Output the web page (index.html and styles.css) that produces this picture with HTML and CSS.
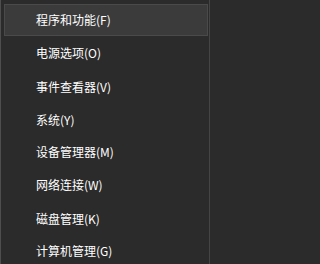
FILE: index.html
```html
<!DOCTYPE html>
<html lang="zh-CN">
<head>
<meta charset="utf-8">
<link rel="stylesheet" href="styles.css">
</head>
<body>
<ul class="menu">
  <li class="item active">程序和功能(F)</li>
  <li class="item">电源选项(O)</li>
  <li class="item">事件查看器(V)</li>
  <li class="item">系统(Y)</li>
  <li class="item">设备管理器(M)</li>
  <li class="item">网络连接(W)</li>
  <li class="item">磁盘管理(K)</li>
  <li class="item">计算机管理(G)</li>
</ul>
</body>
</html>
```
FILE: styles.css
```css
html, body {
  margin: 0;
  padding: 0;
  background: #2b2b2b;
  height: 264px;
  overflow: hidden;
}
.menu {
  box-sizing: border-box;
  list-style: none;
  margin: 0;
  padding: 4px 1px 0 3px;
  border-left: 1px solid #4e4e4e;
  border-right: 1px solid #454545;
  height: 264px;
  width: 210px;
  font-family: "Noto Sans CJK SC", "Noto Sans", sans-serif;
  font-size: 12px;
  color: #ffffff;
}
.item {
  box-sizing: border-box;
  width: 204px;
  height: 32px;
  margin-bottom: 1px;
  padding-left: 31px;
  border: 1px solid transparent;
  display: flex;
  align-items: center;
  line-height: 1;
}
.item:nth-child(3), .item:nth-child(4), .item:nth-child(7) {
  padding-top: 1px;
}
.item.active {
  background: #3b3b3b;
  border-color: #4a4a4a;
}
```
